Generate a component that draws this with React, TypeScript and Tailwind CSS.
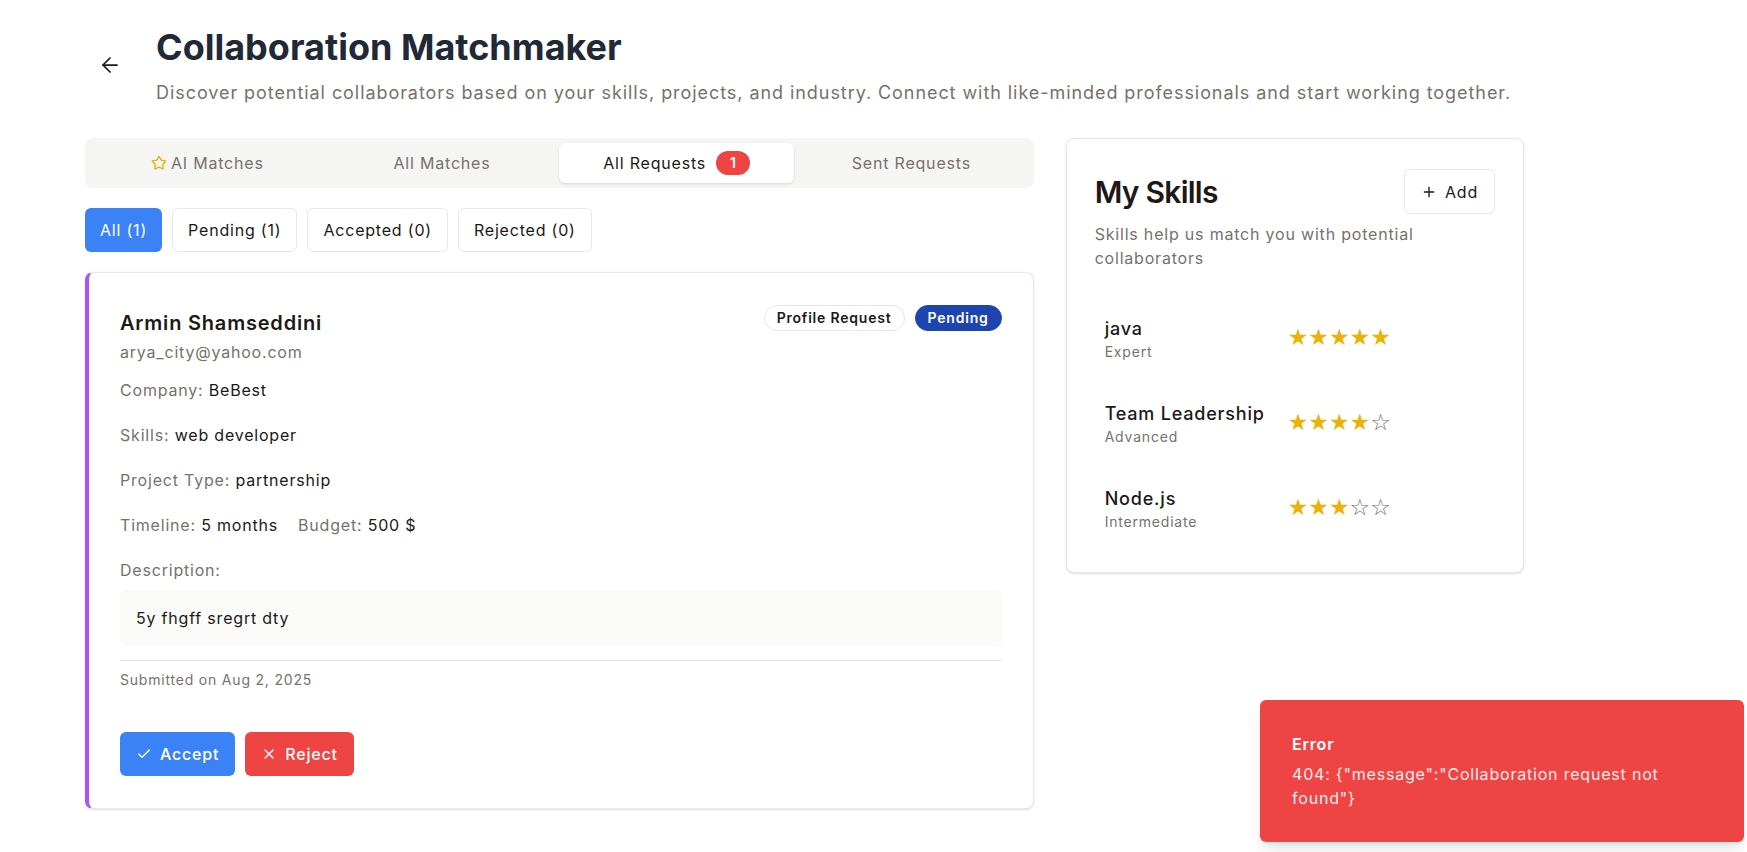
import { ArrowLeft, Check, Plus, Star, X } from "lucide-react";

const skills = [
  { name: "java", level: "Expert", rating: 5 },
  { name: "Team Leadership", level: "Advanced", rating: 4 },
  { name: "Node.js", level: "Intermediate", rating: 3 },
];

function Stars({ rating }: { rating: number }) {
  return (
    <div className="mb-1 flex font-['DejaVu_Sans',sans-serif] text-[23px] leading-none tracking-normal">
      {[1, 2, 3, 4, 5].map((i) =>
        i <= rating ? (
          <span key={i} className="text-[#eab308]">★</span>
        ) : (
          <span key={i} className="text-[#78716c]">☆</span>
        )
      )}
    </div>
  );
}

function Field({ label, value }: { label: string; value: string }) {
  return (
    <p className="text-base leading-6">
      <span className="text-[#78716c]">{label}:</span>{" "}
      <span className="text-[#1c1917]">{value}</span>
    </p>
  );
}

export default function App() {
  return (
    <div className="relative min-h-[852px] bg-white font-['Inter',sans-serif] tracking-[0.05em] text-[#1c1917]">
      <div className="w-[1524px] pl-[85px] pt-[27px]">
        {/* header */}
        <div className="flex items-center gap-[26px] pl-[5px]">
          <button className="-mt-1 flex h-10 w-10 items-center justify-center rounded-md text-[#1c1917]">
            <ArrowLeft className="h-6 w-6" strokeWidth={1.75} />
          </button>
          <div>
            <h1 className="text-4xl leading-10 font-bold tracking-normal text-[#1f2937]">
              Collaboration Matchmaker
            </h1>
            <p className="mt-3 whitespace-nowrap text-lg leading-7 tracking-[0.052em] text-[#78716c]">
              Discover potential collaborators based on your skills, projects, and industry. Connect with
              like-minded professionals and start working together.
            </p>
          </div>
        </div>

        <div className="mt-[31px] grid grid-cols-3 gap-8">
          {/* left column */}
          <div className="col-span-2">
            <div className="grid grid-cols-4 rounded-lg bg-[#f5f5f4] p-[5px]">
              <button className="flex h-10 items-center justify-center gap-1 text-base text-[#78716c]">
                <Star className="h-4 w-4 text-[#eab308]" />
                AI Matches
              </button>
              <button className="flex h-10 items-center justify-center text-base text-[#78716c]">
                All Matches
              </button>
              <button className="flex h-10 items-center justify-center rounded-md bg-white text-base text-[#1c1917] shadow-sm">
                All Requests
                <span className="ml-2.5 flex h-6 items-center rounded-full bg-[#ef4444] px-[14px] text-sm font-semibold tracking-normal text-white">
                  1
                </span>
              </button>
              <button className="flex h-10 items-center justify-center text-base text-[#78716c]">
                Sent Requests
              </button>
            </div>

            <div className="mt-5 flex gap-2.5">
              <button className="h-11 rounded-md bg-[#3b82f6] px-[15px] text-base text-white">All (1)</button>
              <button className="h-11 rounded-md border border-gray-200 bg-white px-[15px] text-base">Pending (1)</button>
              <button className="h-11 rounded-md border border-gray-200 bg-white px-[15px] text-base">Accepted (0)</button>
              <button className="h-11 rounded-md border border-gray-200 bg-white px-[15px] text-base">Rejected (0)</button>
            </div>

            {/* request card */}
            <div className="mt-5 rounded-lg border border-gray-200 border-l-4 border-l-[#a855f7] bg-white px-[31px] py-8 shadow-sm">
              <div className="flex items-start justify-between">
                <div className="pt-[3px]">
                  <h3 className="text-xl leading-[30px] font-semibold tracking-[0.04em]">Armin Shamseddini</h3>
                  <p className="mt-[2px] text-base leading-6 text-[#78716c]">arya_city@yahoo.com</p>
                </div>
                <div className="flex gap-2.5">
                  <span className="rounded-full border border-gray-200 bg-white px-3 py-0.5 text-sm font-semibold">
                    Profile Request
                  </span>
                  <span className="rounded-full border border-[#1e44b0] bg-[#1e44b0] px-3 py-0.5 text-sm font-semibold text-white">
                    Pending
                  </span>
                </div>
              </div>

              <div className="mt-[14px] flex flex-col gap-[21px]">
                <Field label="Company" value="BeBest" />
                <Field label="Skills" value="web developer" />
                <Field label="Project Type" value="partnership" />
                <div className="flex gap-5">
                  <Field label="Timeline" value="5 months" />
                  <Field label="Budget" value="500 $" />
                </div>
                <div>
                  <p className="text-base leading-6 text-[#78716c]">Description:</p>
                  <div className="mt-2 rounded-md bg-[#fafaf9] p-4 text-base leading-6">5y fhgff sregrt dty</div>
                </div>
              </div>

              <div className="mt-[14px] border-t border-gray-200 pt-[9px]">
                <p className="text-sm leading-5 text-[#78716c]">Submitted on Aug 2, 2025</p>
              </div>

              <div className="mt-[42px] flex gap-2.5">
                <button className="flex h-11 items-center gap-2 rounded-md bg-[#3b82f6] px-4 text-base font-medium text-white">
                  <Check className="h-4 w-4" />
                  Accept
                </button>
                <button className="flex h-11 items-center gap-2 rounded-md bg-[#ef4444] px-4 text-base font-medium text-white">
                  <X className="h-4 w-4" />
                  Reject
                </button>
              </div>
            </div>
          </div>

          {/* my skills */}
          <div className="self-start rounded-lg border border-gray-200 bg-white p-7 pt-[30px] shadow-sm">
            <div className="flex items-center justify-between">
              <h2 className="text-3xl font-semibold tracking-tight">My Skills</h2>
              <button className="flex h-[45px] items-center gap-2 rounded-md border border-gray-200 bg-white px-4 text-base">
                <Plus className="h-4 w-4" />
                Add
              </button>
            </div>
            <p className="mt-2 text-base leading-6 text-[#78716c]">
              Skills help us match you with potential collaborators
            </p>
            <div className="mt-[34px] flex flex-col gap-[15px]">
              {skills.map((s) => (
                <div key={s.name} className="flex items-center px-2.5 py-3">
                  <div className="w-[183px]">
                    <p className="text-lg leading-[26px] font-medium">{s.name}</p>
                    <p className="text-sm leading-5 text-[#78716c]">{s.level}</p>
                  </div>
                  <Stars rating={s.rating} />
                </div>
              ))}
            </div>
          </div>
        </div>
      </div>

      {/* toast */}
      <div className="absolute top-[700px] right-[3px] w-[484px] rounded-md bg-[#ef4444] py-8 pr-[60px] pl-8 text-white shadow-lg">
        <p className="text-base leading-6 font-semibold">Error</p>
        <p className="mt-1.5 text-base leading-6 opacity-90">
          {'404: {"message":"Collaboration request not found"}'}
        </p>
      </div>
    </div>
  );
}
